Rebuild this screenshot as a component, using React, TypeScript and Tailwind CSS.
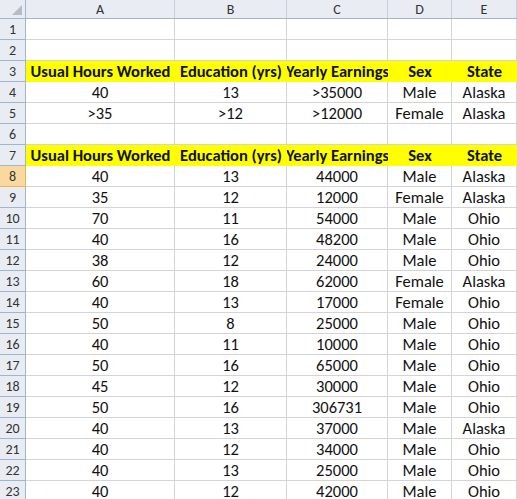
const cols = [
  { l: "A", w: 149 },
  { l: "B", w: 112 },
  { l: "C", w: 101 },
  { l: "D", w: 64 },
  { l: "E", w: 65 },
];
const hdr = ["Usual Hours Worked", "Education (yrs)", "Yearly Earnings", "Sex", "State"];
const data: (string[] | null | "h")[] = [
  null, null, "h",
  ["40", "13", ">35000", "Male", "Alaska"],
  [">35", ">12", ">12000", "Female", "Alaska"],
  null, "h",
  ["40", "13", "44000", "Male", "Alaska"],
  ["35", "12", "12000", "Female", "Alaska"],
  ["70", "11", "54000", "Male", "Ohio"],
  ["40", "16", "48200", "Male", "Ohio"],
  ["38", "12", "24000", "Male", "Ohio"],
  ["60", "18", "62000", "Female", "Alaska"],
  ["40", "13", "17000", "Female", "Ohio"],
  ["50", "8", "25000", "Male", "Ohio"],
  ["40", "11", "10000", "Male", "Ohio"],
  ["50", "16", "65000", "Male", "Ohio"],
  ["45", "12", "30000", "Male", "Ohio"],
  ["50", "16", "306731", "Male", "Ohio"],
  ["40", "13", "37000", "Male", "Alaska"],
  ["40", "12", "34000", "Male", "Ohio"],
  ["40", "13", "25000", "Male", "Ohio"],
  ["40", "12", "42000", "Male", "Ohio"],
];
export default function App() {
  return (
    <div className="w-[517px] h-[499px] overflow-hidden bg-white text-[16.5px] text-[#111]" style={{ fontFamily: "Carlito, 'Open Sans', 'Liberation Sans', sans-serif" }}>
      <div className="flex h-[19px] bg-[#e9edf3] border-b border-[#9eb6ce]">
        <div className="w-[26px] shrink-0 border-r border-[#9eb6ce] relative">
          <div className="absolute right-[3px] bottom-[3px] w-0 h-0 border-l-[10px] border-l-transparent border-b-[10px] border-b-[#b4bcc8]" />
        </div>
        {cols.map((c) => (
          <div key={c.l} style={{ width: c.w }} className="shrink-0 border-r border-[#c5d0dc] flex items-center justify-center text-[14px] text-[#333]">{c.l}</div>
        ))}
      </div>
      {data.map((r, i) => {
        const n = i + 1;
        const active = n === 8;
        return (
          <div key={i} className="flex h-[21px]">
            <div className={`w-[26px] shrink-0 border-r border-b flex items-center justify-center text-[14px] ${active ? "bg-[#f9d99f] border-[#f1b34e] text-[#333]" : "bg-[#e9edf3] border-[#9eb6ce] text-[#333]"}`}>{n}</div>
            {cols.map((c, j) => {
              const h = r === "h";
              return (
                <div key={c.l} style={{ width: c.w }} className={`shrink-0 flex items-center justify-center whitespace-nowrap overflow-hidden ${h ? "bg-[#ffff00] font-bold border-b border-[#ffff00]" : "border-r border-b border-[#d4d4d4]"}`}>
                  {h ? hdr[j] : r ? (r as string[])[j] : ""}
                </div>
              );
            })}
          </div>
        );
      })}
    </div>
  );
}
